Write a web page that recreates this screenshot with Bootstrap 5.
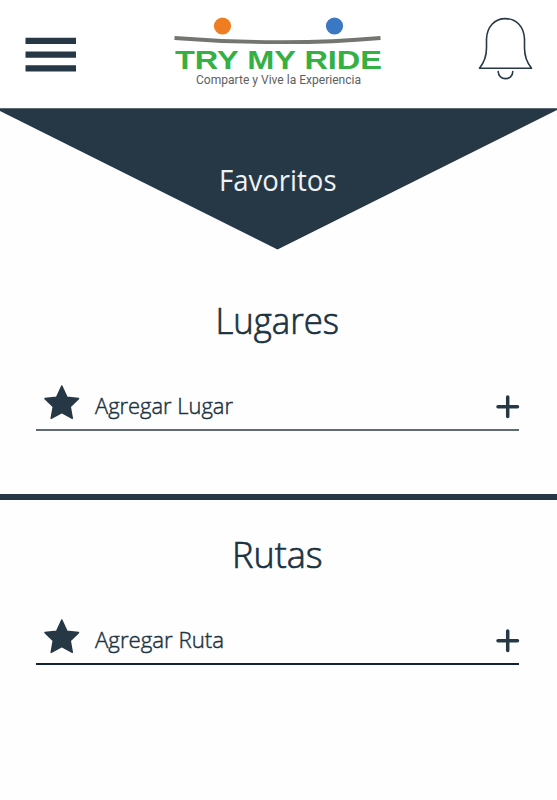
<!DOCTYPE html>
<html lang="es">
<head>
<meta charset="utf-8">
<meta name="viewport" content="width=device-width, initial-scale=1">
<title>Favoritos</title>
<link href="https://cdn.jsdelivr.net/npm/bootstrap@5.3.0/dist/css/bootstrap.min.css" rel="stylesheet">
<style>
  :root { --ink: #263845; }
  body { font-family: "Open Sans", "Noto Sans", sans-serif; color: var(--ink); background: #fefefe; height: 800px; overflow: hidden; }
  svg { display: block; overflow: visible; }
  svg text { fill: #1b3241; }
  section text { font-weight: 300; stroke: #1b3241; stroke-width: .45px; }
  .section-title text { stroke-width: .7px; }
  .topbar { height: 108px; padding: 0 24px 0 25px; background: #fff; }
  .menu-btn { margin-top: 37px; }
  .brand-logo { margin-top: 12px; }
  .bell-btn { margin-top: 17px; }
  .banner { height: 142px; }
  .banner text { fill: #eef2f4; }
  .places { height: 244px; padding-top: 44px; }
  .routes { padding-top: 34px; }
  .add-row { width: 483px; height: 61px; margin: 32px 0 0 36px; padding: 0 0 0 8px; border-bottom: 2px solid #606a72; }
  .routes .add-row { margin-top: 26px; border-bottom-color: #122338; }
  .section-title { height: 44px; }
  .divider-bar { height: 6px; background: var(--ink); }
</style>
<script src="https://cdn.jsdelivr.net/npm/bootstrap@5.3.0/dist/js/bootstrap.bundle.min.js"></script>
</head>
<body>
<header class="topbar d-flex align-items-start justify-content-between">
  <button class="menu-btn btn p-0 border-0 rounded-0" aria-label="Menú">
    <svg width="51" height="35"><path fill="#263845" d="M.5 .8h50.500v6.200H.5zM.5 14.500h50.500v6.200H.5zM.5 28.300h50.500v6.200H.5z"/></svg>
  </button>
  <a class="brand-logo" href="#" aria-label="Try My Ride">
    <svg width="210" height="78" viewBox="173 12 210 78">
      <circle cx="222.500" cy="26" r="8.600" fill="#ef7d22"/>
      <circle cx="334.500" cy="26" r="8.600" fill="#3b78c3"/>
      <path d="M174.500 38Q225 42 278 42.200T380.500 38" fill="none" stroke="#737571" stroke-width="3.800"/>
      <text x="175" y="69" textLength="207" lengthAdjust="spacingAndGlyphs" font-family="Liberation Sans, sans-serif" font-weight="700" font-size="25" style="fill:#35b044">TRY MY RIDE</text>
      <text x="196" y="84.300" textLength="165" lengthAdjust="spacingAndGlyphs" font-family="Roboto, sans-serif" font-size="12.800" style="fill:#60615f">Comparte y Vive la Experiencia</text>
    </svg>
  </a>
  <button class="bell-btn btn p-0 border-0" aria-label="Notificaciones">
    <svg width="54" height="64" viewBox="479 17 54 64" fill="none" stroke="#263845" stroke-width="1.600" stroke-linejoin="round" stroke-linecap="round">
      <path d="M479.500 68.200C484.500 62 486.500 57 486.500 48V39C487 27 494.500 18.600 505.500 18.600S524 27 524.500 39V48C524.500 57 526.500 62 531.500 68.200Z"/>
      <path d="M498.200 71.500C498.200 81 512.800 81 512.800 71.500"/>
    </svg>
  </button>
</header>
<main>
  <h1 class="banner m-0">
    <svg width="557" height="142" viewBox="0 108 557 142">
      <path d="M0 108.300H557V110L277.500 249.500L0 111Z" fill="#263845"/>
      <text x="219" y="191" textLength="117.500" lengthAdjust="spacingAndGlyphs" font-size="28.500" font-weight="400">Favoritos</text>
    </svg>
  </h1>
  <section class="places">
    <h2 class="section-title m-0">
      <svg width="557" height="44" viewBox="0 294 557 44"><text x="215.500" y="333.700" textLength="123.500" lengthAdjust="spacingAndGlyphs" font-size="36">Lugares</text></svg>
    </h2>
    <a href="#" class="add-row d-flex justify-content-between text-decoration-none">
      <svg width="200" height="59" viewBox="44 370 200 59">
        <path fill="#263845" stroke="#263845" stroke-width="1.500" stroke-linejoin="round" d="M61.800 386L67 397.300L78.500 398.600L70.200 406.600L72.300 418.300L61.800 412.700L51.200 418.300L53.300 406.600L45 398.600L56.600 397.300Z"/>
        <text x="95" y="414" textLength="138" lengthAdjust="spacingAndGlyphs" font-size="22.500">Agregar Lugar</text>
      </svg>
      <svg width="23" height="59" viewBox="496 370 23 59"><path d="M498 406.700H517.500M507.700 397V416.500" stroke="#263845" stroke-width="3.500" stroke-linecap="round"/></svg>
    </a>
  </section>
  <div class="divider-bar"></div>
  <section class="routes">
    <h2 class="section-title m-0">
      <svg width="557" height="44" viewBox="0 534 557 44"><text x="232" y="568.300" textLength="90.500" lengthAdjust="spacingAndGlyphs" font-size="36">Rutas</text></svg>
    </h2>
    <a href="#" class="add-row d-flex justify-content-between text-decoration-none">
      <svg width="200" height="59" viewBox="44 370 200 59">
        <path fill="#263845" stroke="#263845" stroke-width="1.500" stroke-linejoin="round" d="M61.800 386L67 397.300L78.500 398.600L70.200 406.600L72.300 418.300L61.800 412.700L51.200 418.300L53.300 406.600L45 398.600L56.600 397.300Z"/>
        <text x="95" y="414" textLength="129" lengthAdjust="spacingAndGlyphs" font-size="22.500">Agregar Ruta</text>
      </svg>
      <svg width="23" height="59" viewBox="496 370 23 59"><path d="M498 406.700H517.500M507.700 397V416.500" stroke="#263845" stroke-width="3.500" stroke-linecap="round"/></svg>
    </a>
  </section>
</main>
</body>
</html>
